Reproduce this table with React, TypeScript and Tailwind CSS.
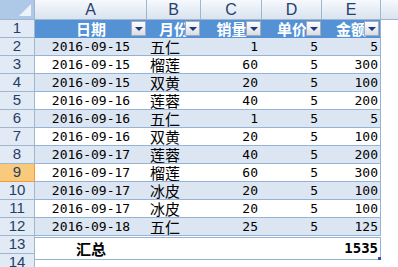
const rows: [string, string, number, number, number][] = [
  ['2016-09-15', '五仁', 1, 5, 5],
  ['2016-09-15', '榴莲', 60, 5, 300],
  ['2016-09-15', '双黄', 20, 5, 100],
  ['2016-09-16', '莲蓉', 40, 5, 200],
  ['2016-09-16', '五仁', 1, 5, 5],
  ['2016-09-16', '双黄', 20, 5, 100],
  ['2016-09-17', '莲蓉', 40, 5, 200],
  ['2016-09-17', '榴莲', 60, 5, 300],
  ['2016-09-17', '冰皮', 20, 5, 100],
  ['2016-09-17', '冰皮', 20, 5, 100],
  ['2016-09-18', '五仁', 25, 5, 125],
];

const mono = { fontFamily: '"DejaVu Sans Mono", monospace' };
const cjk = { fontFamily: '"Noto Sans CJK SC", sans-serif' };
const label = { fontFamily: '"Liberation Sans", Arial, sans-serif' };

function FilterButton() {
  return (
    <div className="absolute right-px top-px w-[15px] h-[15px] border border-[#a3acb8] bg-gradient-to-b from-[#fdfdfe] to-[#d9dee6] flex items-center justify-center">
      <div className="w-0 h-0 border-l-[4px] border-r-[4px] border-t-[4px] border-l-transparent border-r-transparent border-t-[#1f3a7a]" />
    </div>
  );
}

function RowHead({ n, active }: { n: number; active?: boolean }) {
  return (
    <div
      style={label}
      className={
        active
          ? 'w-[35px] shrink-0 border-r border-b border-[#f29b3a] bg-[#f9c97c] text-[#243f66] text-[15px] flex items-center justify-center'
          : 'w-[35px] shrink-0 border-r border-b border-[#9eb6ce] bg-[#e2eaf5] text-[#243f66] text-[15px] flex items-center justify-center'
      }
    >
      {n}
    </div>
  );
}

export default function App() {
  const cols = [
    { l: 'A', w: 'w-[112px]' },
    { l: 'B', w: 'w-[54px]' },
    { l: 'C', w: 'w-[61px]' },
    { l: 'D', w: 'w-[60px]' },
    { l: 'E', w: 'w-[59px]' },
  ];
  const heads = ['日期', '月份', '销量', '单价', '金额'];

  return (
    <div className="w-[398px] h-[267px] overflow-hidden bg-white text-black">
      {/* column letters */}
      <div className="flex h-[20px]">
        <div className="w-[35px] shrink-0 border-r border-b border-[#9eb6ce] bg-[#aec8e8] relative">
          <svg className="absolute right-[3px] bottom-[3px]" width="12" height="12" viewBox="0 0 12 12">
            <path d="M12 0 L12 12 L0 12 Z" fill="#eef3f9" />
          </svg>
        </div>
        {cols.map((c) => (
          <div
            key={c.l}
            style={label}
            className={`${c.w} shrink-0 border-r border-b border-[#9eb6ce] bg-gradient-to-b from-[#f6f9fd] to-[#dae3ef] text-[#27406a] text-[16px] flex items-center justify-center`}
          >
            {c.l}
          </div>
        ))}
        <div className="flex-1 border-b border-[#9eb6ce] bg-gradient-to-b from-[#f6f9fd] to-[#dae3ef]" />
      </div>

      {/* table header */}
      <div className="flex h-[18px]">
        <RowHead n={1} />
        {cols.map((c, i) => (
          <div
            key={c.l}
            style={cjk}
            className={`${c.w} shrink-0 relative bg-[#5592d5] border-b border-[#5592d5] ${i === 4 ? 'border-r border-r-[#95b3d7]' : ''} text-white font-bold text-[15px] leading-[17px] flex items-center justify-center overflow-hidden`}
          >
            <span>{heads[i]}</span>
            <FilterButton />
          </div>
        ))}
        <div className="flex-1" />
      </div>

      {/* data rows */}
      {rows.map((r, i) => {
        const n = i + 2;
        const band = n % 2 === 0 ? 'bg-[#dce6f2]' : 'bg-white';
        return (
          <div key={n} className="flex h-[18px]">
            <RowHead n={n} active={n === 9} />
            <div className={`flex ${band} border-b border-[#95b3d7] text-[13px]`}>
              <div style={mono} className="w-[112px] flex items-center justify-center">
                {r[0]}
              </div>
              <div style={cjk} className="w-[54px] flex items-center pl-[3px] text-[15px] leading-[17px]">
                {r[1]}
              </div>
              <div style={mono} className="w-[61px] flex items-center justify-end pr-[4px]">
                {r[2]}
              </div>
              <div style={mono} className="w-[60px] flex items-center justify-end pr-[4px]">
                {r[3]}
              </div>
              <div style={mono} className="w-[59px] flex items-center justify-end pr-[2px] border-r border-[#95b3d7]">
                {r[4]}
              </div>
            </div>
            <div className="flex-1" />
          </div>
        );
      })}

      {/* total row */}
      <div className="flex h-[18px]">
        <RowHead n={13} />
        <div className="flex flex-col pt-px bg-white">
          <div className="flex flex-1 border-t border-b border-[#95b3d7] font-bold">
            <div style={cjk} className="w-[112px] flex items-center justify-center text-[15px] leading-[15px]">
              汇总
            </div>
            <div className="w-[54px]" />
            <div className="w-[61px]" />
            <div className="w-[60px]" />
            <div style={mono} className="w-[59px] relative flex items-center justify-end pr-[2px] border-r border-[#95b3d7] text-[14px]">
              1535
              <div className="absolute right-[-1px] bottom-[-1px] w-[3px] h-[3px] bg-[#2f4f9e]" />
            </div>
          </div>
        </div>
        <div className="flex-1" />
      </div>

      <div className="flex h-[18px]">
        <RowHead n={14} />
        <div className="flex-1" />
      </div>
    </div>
  );
}
